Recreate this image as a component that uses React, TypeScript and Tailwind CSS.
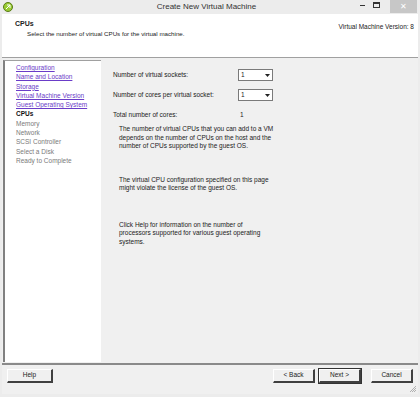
import { useState } from "react";

const steps = [
  { label: "Configuration", state: "done" },
  { label: "Name and Location", state: "done" },
  { label: "Storage", state: "done" },
  { label: "Virtual Machine Version", state: "done" },
  { label: "Guest Operating System", state: "done" },
  { label: "CPUs", state: "current" },
  { label: "Memory", state: "todo" },
  { label: "Network", state: "todo" },
  { label: "SCSI Controller", state: "todo" },
  { label: "Select a Disk", state: "todo" },
  { label: "Ready to Complete", state: "todo" },
];

function Combo({ value }: { value: string }) {
  return (
    <div className="flex h-[12px] w-[35px] items-center border border-[#7a7a7a] bg-white">
      <span className="flex-1 pl-[2px] text-[6.5px] leading-none">{value}</span>
      <span className="flex h-full w-[10px] items-center justify-center">
        <svg width="5" height="3" viewBox="0 0 5 3">
          <path d="M0 0h5L2.5 3z" fill="#222" />
        </svg>
      </span>
    </div>
  );
}

function WinButton({ label, primary, wide }: { label: string; primary?: boolean; wide?: boolean }) {
  return (
    <button
      className={
        "h-[14px] border-t border-l border-t-white border-l-white border-r-2 border-b-2 border-r-[#404040] border-b-[#404040] bg-[#f0f0f0] text-[6.5px] leading-none text-[#222] " +
        (wide ? "w-[46px] " : "w-[42px] ") +
        (primary ? "outline outline-1 outline-[#333]" : "")
      }
    >
      {label}
    </button>
  );
}

export default function App() {
  const [sockets] = useState("1");
  const [cores] = useState("1");

  return (
    <div
      className="flex h-[397px] w-[420px] flex-col bg-[#ececec] text-[#222]"
      style={{ fontFamily: '"Liberation Sans", Arial, sans-serif' }}
    >
      {/* title bar */}
      <div className="relative flex h-[14px] items-center">
        <div className="ml-[3px] flex h-[10px] w-[10px] items-center justify-center rounded-full border border-[#5a7a1a] bg-[#9acd32]">
          <svg width="6" height="6" viewBox="0 0 6 6">
            <path d="M1 5L5 1M2 1h3v3" stroke="#fff" strokeWidth="1" fill="none" />
          </svg>
        </div>
        <div className="flex-1 pl-[40px] text-center text-[8px] text-[#333]">Create New Virtual Machine</div>
        <div className="flex items-start self-stretch">
          <span className="mt-[5px] mr-[8px] h-[1px] w-[5px] bg-[#333]" />
          <span className="mt-[2px] mr-[10px] h-[6px] w-[7px] border border-t-2 border-[#333]" />
          <span className="mr-[3px] flex h-[13px] w-[27px] items-center justify-center bg-[#c7c7c7] text-[8px] text-white">
            ✕
          </span>
        </div>
      </div>

      {/* frame */}
      <div className="mx-[2px] mb-[3px] flex flex-1 flex-col bg-[#f0f0f0]">
        <div className="flex h-[44px] justify-between border-b border-[#a0a0a0] bg-white pt-[5px] pr-[4px] pl-[13px]">
          <div>
            <div className="text-[7px] font-bold leading-[10px]">CPUs</div>
            <div className="pl-[12px] text-[6.2px] leading-[9px]">
              Select the number of virtual CPUs for the virtual machine.
            </div>
          </div>
          <div className="pt-[3px] text-[6.5px] leading-[9px]">Virtual Machine Version: 8</div>
        </div>

        <div className="flex flex-1 pt-[2px]">
          <div className="ml-[1px] flex w-[98px] flex-col border-l-2 border-t border-[#808080] border-t-[#a0a0a0] bg-white pt-[2px] pl-[11px]">
            {steps.map((s) => (
              <div
                key={s.label}
                className={
                  "text-[6.5px] leading-[9.3px] " +
                  (s.state === "done"
                    ? "text-[#6a3cc8] underline"
                    : s.state === "current"
                      ? "font-bold text-[#111]"
                      : "text-[#7a7a7a]")
                }
              >
                {s.label}
              </div>
            ))}
          </div>

          <div className="flex-1 pt-[9px] pl-[12px] text-[6.5px]">
            <div className="flex h-[12px] items-center">
              <span className="w-[125px]">Number of virtual sockets:</span>
              <Combo value={sockets} />
            </div>
            <div className="mt-[8px] flex h-[12px] items-center">
              <span className="w-[125px]">Number of cores per virtual socket:</span>
              <Combo value={cores} />
            </div>
            <div className="mt-[8px] flex h-[12px] items-center">
              <span className="w-[127px]">Total number of cores:</span>
              <span>1</span>
            </div>
            <div className="mt-[4px] pl-[6px] leading-[8.5px]">
              <p>
                The number of virtual CPUs that you can add to a VM
                <br />
                depends on the number of CPUs on the host and the
                <br />
                number of CPUs supported by the guest OS.
              </p>
              <p className="mt-[25px]">
                The virtual CPU configuration specified on this page
                <br />
                might violate the license of the guest OS.
              </p>
              <p className="mt-[28px]">
                Click Help for information on the number of
                <br />
                processors supported for various guest operating
                <br />
                systems.
              </p>
            </div>
          </div>
        </div>

        <div className="mt-[1px] border-t-2 border-[#8a8a8a]" />
        <div className="relative flex h-[29px] items-start px-[5px] pt-[4px]">
          <WinButton label="Help" wide />
          <div className="flex-1" />
          <WinButton label="< Back" />
          <div className="w-[4px]" />
          <WinButton label="Next >" primary />
          <div className="w-[10px]" />
          <WinButton label="Cancel" />
          <svg className="absolute right-[1px] bottom-[1px]" width="8" height="8" viewBox="0 0 8 8">
            <path d="M7 1L1 7M7 3L3 7M7 5L5 7" stroke="#a0a0a0" strokeWidth="0.8" />
          </svg>
        </div>
      </div>
    </div>
  );
}
